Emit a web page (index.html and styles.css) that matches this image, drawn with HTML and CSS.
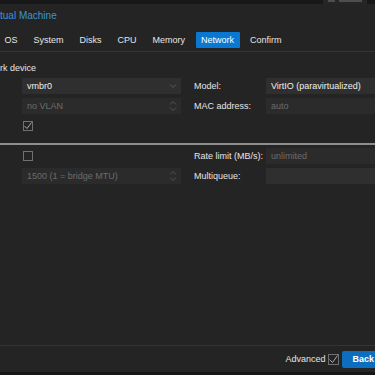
FILE: index.html
```html
<!DOCTYPE html>
<html lang="en">
<head>
  <meta charset="UTF-8" />
  <meta name="viewport" content="width=device-width, initial-scale=1" />
  <title>Create: Virtual Machine</title>
  <link rel="stylesheet" href="styles.css">
</head>
<body>
  <div class="topbar">
    <span class="topbar-btn"><i></i><i class="wide"></i></span>
  </div>

  <div class="dialog">
    <div class="dialog-title">tual Machine</div>

    <div class="tabs">
      <span class="tab">OS</span>
      <span class="tab">System</span>
      <span class="tab">Disks</span>
      <span class="tab">CPU</span>
      <span class="tab">Memory</span>
      <span class="tab active">Network</span>
      <span class="tab">Confirm</span>
    </div>

    <div class="panel">
      <div class="legend">rk device</div>

      <div class="section">
        <div class="column-left">
          <div class="field">
            <span>vmbr0</span>
            <svg class="trigger" width="8" height="6" viewBox="0 0 8 6"><path d="M1 1.5 L4 4.5 L7 1.5" fill="none" stroke="#5a5a5a" stroke-width="1"/></svg>
          </div>
          <div class="field disabled">
            <span>no VLAN</span>
            <svg class="trigger" width="8" height="12" viewBox="0 0 8 12"><path d="M1 4.5 L4 1.5 L7 4.5 M1 7.5 L4 10.5 L7 7.5" fill="none" stroke="#555" stroke-width="1"/></svg>
          </div>
          <div class="check-row">
            <span class="checkbox checked">
              <svg width="8" height="8" viewBox="0 0 8 8"><path d="M0.5 4 L3 6.5 L7.5 0.5" fill="none" stroke="#a8a8a8" stroke-width="1"/></svg>
            </span>
          </div>
        </div>
        <div class="column-right">
          <div class="form-row">
            <span class="label">Model:</span>
            <div class="field"><span>VirtIO (paravirtualized)</span></div>
          </div>
          <div class="form-row">
            <span class="label">MAC address:</span>
            <div class="field disabled"><span>auto</span></div>
          </div>
        </div>
      </div>

      <div class="separator"></div>

      <div class="section second">
        <div class="column-left">
          <div class="check-row">
            <span class="checkbox"></span>
          </div>
          <div class="field disabled">
            <span>1500 (1 = bridge MTU)</span>
            <svg class="trigger" width="8" height="12" viewBox="0 0 8 12"><path d="M1 4.5 L4 1.5 L7 4.5 M1 7.5 L4 10.5 L7 7.5" fill="none" stroke="#555" stroke-width="1"/></svg>
          </div>
        </div>
        <div class="column-right">
          <div class="form-row">
            <span class="label">Rate limit (MB/s):</span>
            <div class="field disabled"><span>unlimited</span></div>
          </div>
          <div class="form-row">
            <span class="label">Multiqueue:</span>
            <div class="field"><span></span></div>
          </div>
        </div>
      </div>
    </div>

    <div class="toolbar">
      <span class="advanced">Advanced</span>
      <span class="checkbox checked big">
        <svg width="9" height="9" viewBox="0 0 9 9"><path d="M0.5 4.5 L3.5 7.5 L8.5 0.5" fill="none" stroke="#a8a8a8" stroke-width="1"/></svg>
      </span>
      <span class="btn-back">Back</span>
    </div>
  </div>

  <div class="bottombar"></div>
</body>
</html>
```

FILE: styles.css
```css
body {
  margin: 0;
  width: 375px;
  height: 375px;
  overflow: hidden;
  background: #1b1b1b;
  font-family: 'Liberation Sans', Arial, sans-serif;
  font-size: 9px;
  color: #e4e4e4;
  display: flex;
  flex-direction: column;
}
.topbar {
  height: 4px;
  overflow: hidden;
  display: flex;
  justify-content: flex-end;
  padding-right: 8px;
  background: #181818;
}
.topbar-btn {
  width: 44px;
  height: 4px;
  padding: 0 5px;
  box-sizing: border-box;
  background: #262626;
  display: flex;
  align-items: flex-start;
  gap: 4px;
}
.topbar-btn i {
  width: 7px;
  height: 2px;
  background: #4e4e4e;
}
.topbar-btn i.wide {
  width: 24px;
}
.dialog {
  flex: 1;
  background: #242424;
  display: flex;
  flex-direction: column;
  min-height: 0;
}
.dialog-title {
  height: 22px;
  line-height: 23px;
  font-size: 10px;
  color: #3b93d9;
  white-space: nowrap;
}
.tabs {
  height: 26px;
  display: flex;
  align-items: center;
  gap: 5px;
  margin-left: -1px;
  padding-top: 2px;
  box-sizing: border-box;
  border-bottom: 1px solid #353535;
  white-space: nowrap;
}
.tab {
  padding: 0 5.5px;
  height: 16px;
  line-height: 16px;
  color: #e6e6e6;
  border-radius: 1px;
}
.tab.active {
  background: #0a78d0;
  color: #fff;
}
.panel {
  flex: 1;
}
.legend {
  height: 26px;
  line-height: 32px;
  white-space: nowrap;
  color: #e8e8e8;
}
.section {
  display: flex;
  padding-left: 22px;
}
.section.second {
  margin-top: 3px;
}
.column-left {
  width: 159px;
  flex-shrink: 0;
  margin-right: 13px;
  display: flex;
  flex-direction: column;
  gap: 4px;
}
.column-right {
  display: flex;
  flex-direction: column;
  gap: 4px;
}
.form-row {
  display: flex;
  align-items: center;
  height: 16px;
}
.label {
  width: 72px;
  flex-shrink: 0;
  white-space: nowrap;
  color: #e4e4e4;
}
.field {
  width: 159px;
  height: 16px;
  flex-shrink: 0;
  box-sizing: border-box;
  padding: 0 5px;
  background: #2f2f2f;
  display: flex;
  align-items: center;
  justify-content: space-between;
  white-space: nowrap;
  color: #f0f0f0;
}
.field.disabled {
  background: #2b2b2b;
  color: #6c6c6c;
}
.trigger {
  flex-shrink: 0;
  margin-right: -1px;
}
.check-row {
  height: 16px;
  display: flex;
  align-items: center;
  padding-left: 1px;
}
.checkbox {
  width: 10px;
  height: 10px;
  box-sizing: border-box;
  border: 1px solid #707070;
  display: flex;
  align-items: center;
  justify-content: center;
}
.checkbox.big {
  width: 11px;
  height: 11px;
}
.separator {
  height: 2px;
  margin-top: 9px;
  background: #8e8e8e;
}
.toolbar {
  height: 26px;
  border-top: 1px solid #343434;
  display: flex;
  align-items: center;
  justify-content: flex-end;
  margin-right: -10px;
}
.advanced {
  margin-right: 3px;
  color: #e4e4e4;
}
.btn-back {
  margin-left: 3px;
  height: 17px;
  line-height: 17px;
  padding: 0 11px 0 10px;
  background: #0d6ebf;
  color: #fff;
  border-radius: 2px;
  font-weight: bold;
}
.bottombar {
  height: 3px;
  background: #161616;
}
```
